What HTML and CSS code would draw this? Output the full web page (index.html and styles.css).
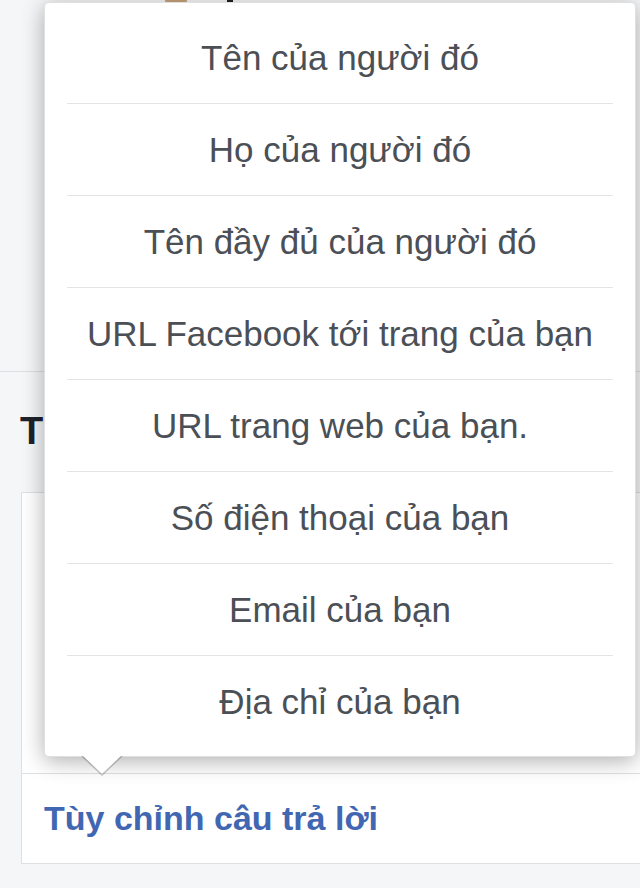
FILE: index.html
```html
<!DOCTYPE html>
<html lang="vi">

<head>
    <meta charset="UTF-8">
    <meta name="viewport" content="width=device-width, initial-scale=1.0">
    <title>Tùy chỉnh câu trả lời</title>
    <link rel="stylesheet" href="styles.css">
</head>

<body>
    <div class="page">
        <div class="top-area">
            <span class="avatar"></span>
            <span class="dot"></span>
        </div>
        <h2 class="section-title">Trả lời tự động</h2>
        <div class="card">
            <div class="card-body"></div>
            <div class="card-footer">
                <a href="#" class="custom-link">Tùy chỉnh câu trả lời</a>
            </div>
        </div>
    </div>

    <!-- Popover menu over the card -->
    <div class="menu">
        <ul class="menu-list">
            <li>Tên của người đó</li>
            <li>Họ của người đó</li>
            <li>Tên đầy đủ của người đó</li>
            <li>URL Facebook tới trang của bạn</li>
            <li>URL trang web của bạn.</li>
            <li>Số điện thoại của bạn</li>
            <li>Email của bạn</li>
            <li>Địa chỉ của bạn</li>
        </ul>
    </div>
</body>

</html>
```
FILE: styles.css
```css
body {
    font-family: "Liberation Sans", Arial, sans-serif;
    margin: 0;
    background: #f5f6f7;
    color: #4b4f56;
    overflow: hidden;
}

.page {
    width: 640px;
    height: 888px;
}

.top-area {
    height: 371px;
    border-bottom: 1px solid #dddfe2;
    display: flex;
    gap: 40px;
    padding-left: 165px;
}

.avatar {
    width: 22px;
    height: 6px;
    background: #c9a27a;
    border-radius: 0 0 10px 10px;
}

.dot {
    width: 6px;
    height: 5px;
    background: #222;
    border-radius: 0 0 3px 3px;
}

.section-title {
    margin: 0;
    padding: 38px 0 0 20px;
    height: 120px;
    box-sizing: border-box;
    font-size: 38px;
    font-weight: bold;
    letter-spacing: 6px;
    color: #1d2129;
    white-space: nowrap;
}

.card {
    margin-left: 21px;
    background: #fff;
    border: 1px solid #dddfe2;
    border-right: none;
}

.card-body {
    height: 280px;
}

.card-footer {
    border-top: 1px solid #dddfe2;
    height: 89px;
    display: flex;
    align-items: center;
    padding-left: 22px;
}

.custom-link {
    color: #4267b2;
    font-weight: bold;
    font-size: 34px;
    text-decoration: none;
}

.menu {
    position: absolute;
    left: 44px;
    top: 2px;
    width: 592px;
    background: #fff;
    border-radius: 5px;
    border: 1px solid rgba(0, 0, 0, 0.12);
    box-shadow: 0 4px 22px rgba(0, 0, 0, 0.32);
    padding: 9px 22px;
    box-sizing: border-box;
}

/* caret under the menu */
.menu::before,
.menu::after {
    content: "";
    position: absolute;
    left: 36px;
    border-style: solid;
    border-color: transparent;
}

.menu::before {
    bottom: -20px;
    border-width: 20px 21px 0 21px;
    border-top-color: rgba(0, 0, 0, 0.22);
}

.menu::after {
    left: 37px;
    bottom: -18px;
    border-width: 19px 20px 0 20px;
    border-top-color: #fff;
}

.menu-list {
    list-style: none;
    margin: 0;
    padding: 0;
}

.menu-list li {
    height: 91px;
    display: flex;
    align-items: center;
    justify-content: center;
    font-size: 35px;
    color: #4b4f56;
    border-bottom: 1px solid #e3e4e6;
}

.menu-list li:last-child {
    border-bottom: none;
}
```
